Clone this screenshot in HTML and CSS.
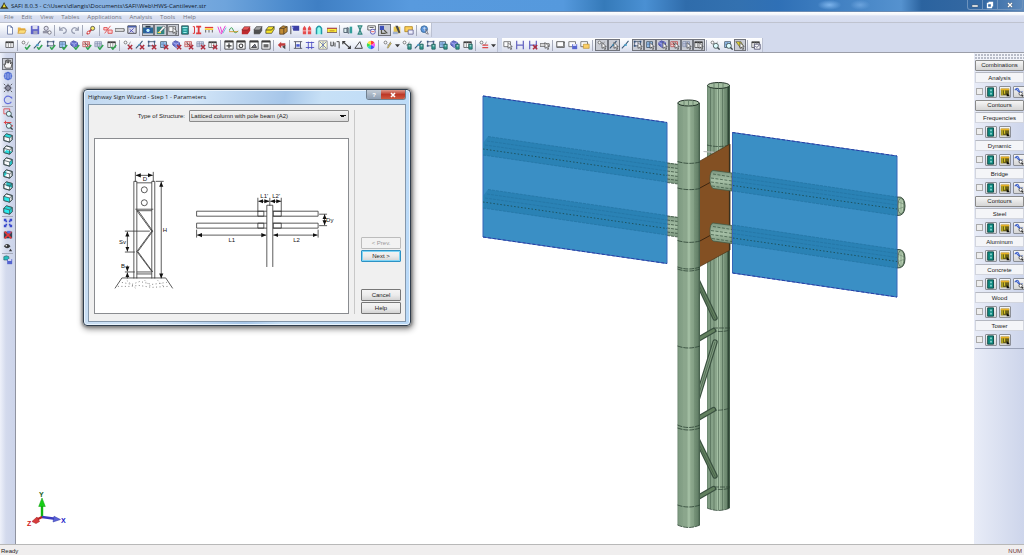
FILE: index.html
```html
<!DOCTYPE html>
<html lang="en">
<head>
<meta charset="utf-8">
<title>SAFI 8.0.3</title>
<link rel="stylesheet" href="styles.css">
</head>
<body>
<div class="app">
  <header class="titlebar">
    <svg class="logo" viewBox="0 0 10 10" aria-hidden="true"><path d="M0 8.500L2.500 5 4.500 1l2 4L9.500 8.500z" fill="#3d3a1c"/><path d="M3 7l1.500-4L6.500 7z" fill="#f0e02c"/></svg>
    <h1 class="title">SAFI 8.0.3 - C:\Users\dlangis\Documents\SAFI\Web\HWS-Cantilever.str</h1>
    <div class="caption">
      <button class="cap" aria-label="Minimize"><svg viewBox="0 0 10 8"><path d="M2 4h6v2H2z" fill="#fff" stroke="#456" stroke-width=".5"/></svg></button>
      <button class="cap" aria-label="Restore"><svg viewBox="0 0 10 8"><path d="M3.500 1.500h4v4M2.500 2.500h4v4h-4z" fill="none" stroke="#fff" stroke-width="1.300"/></svg></button>
      <button class="cap cap-wide" aria-label="Close"><svg viewBox="0 0 10 8"><path d="M3 2l4 4M7 2L3 6" stroke="#456" stroke-width="2.400"/><path d="M3 2l4 4M7 2L3 6" stroke="#fff" stroke-width="1.400"/></svg></button>
    </div>
  </header>

  <nav class="menubar" aria-label="Main menu">
    <button>File</button><button>Edit</button><button>View</button><button>Tables</button><button>Applications</button><button>Analysis</button><button>Tools</button><button>Help</button>
  </nav>

  <div class="toolbars">
    <div class="toolrow"><div class="toolbar bar-standard" role="toolbar" aria-label="Standard" data-bar="standard"></div></div>
    <div class="toolrow">
      <div class="toolbar bar-edit" role="toolbar" aria-label="Edit" data-bar="edit"></div>
      <div class="toolbar bar-select" role="toolbar" aria-label="Selection" data-bar="select"></div>
    </div>
  </div>

  <div class="work">
    <aside class="viewbar" role="toolbar" aria-label="View" data-bar="view"></aside>

    <main class="canvas">
      <svg class="scene" viewBox="16 53 957 491" preserveAspectRatio="xMinYMin meet" role="img" aria-label="Highway sign structure">
        <defs>
          <linearGradient id="col">
            <stop offset="0" stop-color="#66826a"/><stop offset=".06" stop-color="#7f9b82"/><stop offset=".25" stop-color="#86a288"/>
            <stop offset=".27" stop-color="#8ba68c"/><stop offset=".44" stop-color="#8ba68c"/><stop offset=".45" stop-color="#a3bfa3"/><stop offset=".57" stop-color="#a0bba0"/>
            <stop offset=".58" stop-color="#8ea98e"/><stop offset=".74" stop-color="#839f85"/><stop offset=".75" stop-color="#769278"/>
            <stop offset=".9" stop-color="#66826a"/><stop offset="1" stop-color="#405a47"/>
          </linearGradient>
          <linearGradient id="pipe" x2="0" y2="1"><stop offset="0" stop-color="#7b957e"/><stop offset=".5" stop-color="#a6c0a6"/><stop offset="1" stop-color="#7a957d"/></linearGradient>
          <g id="leftpipe">
            <path d="M667 162.500L678 164V184L667 182.500z" fill="url(#pipe)"/>
            <path d="M667 163l11 1.500M667 167l11 1.500M667 171l11 1.500M667 175l11 1.500M667 179l11 1.500M667 182.500l11 1.500" stroke="#2e4433" stroke-width=".7" stroke-dasharray="3 1"/>
          </g>
          <g id="leftshade">
            <path d="M488 136.500L667 162.500V182L483 155V143z" fill="#2a82b5"/>
            <path d="M488 136.500L667 162.500M487 141L667 167M485 145L667 171M483 155L667 182" stroke="#2475a5" stroke-width=".8" stroke-dasharray="3 1" fill="none"/>
            <path d="M483 149L667 175.500" stroke="#1c4f58" stroke-width=".9" stroke-dasharray="1.500 2"/>
          </g>
          <g id="rightpipe">
            <path d="M713 170.500L732 173V191L713 188.500Q710 186 710 179 710 171 713 170.500z" fill="url(#pipe)" stroke="#3d5743" stroke-width=".7"/>
            <path d="M713 174l19 3M711 178l21 3M711 182l21 3M712 186l20 3" stroke="#3a5540" stroke-width=".7" stroke-dasharray="3 1.500"/>
            <path d="M897 197Q905 196 905 206T897 215.500z" fill="#9cb69a" stroke="#24382a" stroke-width=".9"/>
            <ellipse cx="901" cy="206" rx="3" ry="8" fill="#b9d1b4" stroke="#3e5842" stroke-width=".7"/>
            <path d="M901 199v14M898.500 202l5 2M898.500 209l5-2" stroke="#607a64" stroke-width=".5"/>
          </g>
          <g id="rightshade">
            <path d="M733 172.500L897 197V215.500L733 191z" fill="#2a82b5"/>
            <path d="M733 172.500L897 197M733 177L897 201M733 181L897 205M733 191L897 215.500" stroke="#2475a5" stroke-width=".8" stroke-dasharray="3 1" fill="none"/>
            <path d="M733 185.500L897 209" stroke="#1c4f58" stroke-width=".9" stroke-dasharray="1.500 2"/>
          </g>
        </defs>

        <path d="M707 85H730V508Q718.500 513 707 508z" fill="url(#col)"/>
        <path d="M710.500 87V509M714 88V510M718.500 88V510.500M722.500 88V510M727.500 87V509" stroke="#3c5743" stroke-width=".5"/>
        <path d="M728.500 86V508" stroke="#2e4535" stroke-width="1.400"/>
        <ellipse cx="718.500" cy="85.500" rx="11" ry="3" fill="#a2bca0" stroke="#24352a" stroke-width="1"/>
        <path d="M714 83v5M718.500 83v5M723 83v5" stroke="#53705a" stroke-width=".7"/>
        <path d="M707 508Q718.500 513 730 508M707 145Q718.500 148 730 145M712 330Q720 333 730 330M713 328h17M712 410Q722 411 730 408M712 488Q720 491 730 488M714 487h16" fill="none" stroke="#2b4132" stroke-width=".7" stroke-dasharray="5 1"/>
        <path d="M703.500 151.500l11 .800" stroke="#bbb" stroke-width="1.200"/>

        <use href="#leftpipe"/><use href="#leftpipe" y="53"/>
        <path d="M699 161.500L730 144V250L699 267z" fill="#835023" stroke="#4c3317" stroke-width=".7"/>
        <path d="M699 188.500l11-6M699 241.500l11-6" stroke="#3e2610" stroke-width="1"/>
        <path d="M729.500 144.500V250" stroke="#39301d" stroke-width="1.200"/>

        <g stroke-linecap="round" fill="none">
          <path d="M697 280L715 318M697 340L713.500 330.500M697 400L715 342M697 419L713.500 409.500M697 439L715 476M697 498L713.500 488.500" stroke="#3a5140" stroke-width="5.400"/>
          <path d="M697 280L715 318M697 340L713.500 330.500M697 419L713.500 409.500M697 439L715 476M697 498L713.500 488.500" stroke="#62805f" stroke-width="3"/>
          <path d="M697 400L715 342" stroke="#809c80" stroke-width="3"/>
          <path d="M697 281L715 318.500M697 400L715 342M697 440L715 476.500" stroke="#425a45" stroke-width=".7"/>
        </g>

        <path d="M677.500 103H700V525Q688.500 530 677.500 525z" fill="url(#col)"/>
        <path d="M677.500 525Q688.500 530 700 525M677.500 161.500Q688.500 165 700 162M677.500 188Q688.500 191 700 188.500M677.500 240.500Q688.500 244 700 241M677.500 267Q688.500 271 700 267M677.500 269Q688.500 273 700 269M677.500 346Q688.500 350 700 346M677.500 425Q688.500 430 700 425M677.500 428Q688.500 432 700 428M677.500 505Q688.500 509 700 505" fill="none" stroke="#2b4132" stroke-width=".8" stroke-dasharray="5 1"/>
        <ellipse cx="688.500" cy="103" rx="10.700" ry="3" fill="#a2bca0" stroke="#24352a" stroke-width="1"/>
        <path d="M684 101v4M688.500 100.500v5M693 101v4" stroke="#53705a" stroke-width=".7"/>

        <use href="#rightpipe"/><use href="#rightpipe" y="52.500"/>
        <path d="M483 96L667 122.500V263.500L483 237z" fill="#3a8fc5" stroke="#3766b8" stroke-width="1"/>
        <path d="M732.500 132.500L897 156V297L732.500 273z" fill="#3a8fc5" stroke="#3766b8" stroke-width="1"/>
        <path d="M483 96L667 122.500M483 237L667 263.500M732.500 132.500L897 156M732.500 273L897 297" stroke="#2741a6" stroke-width="1" stroke-dasharray="3 2"/>
        <use href="#leftshade"/><use href="#leftshade" y="53"/>
        <use href="#rightshade"/><use href="#rightshade" y="52.500"/>

        <path d="M42 517V505" stroke="#12b512" stroke-width="2.400"/><path d="M42 498l3.300 8.500h-6.600z" fill="#16cf16" stroke="#0a9a0a" stroke-width=".5"/>
        <path d="M42 517l13 1.700" stroke="#3c3cc0" stroke-width="2.400"/><path d="M60.500 519.500l-7.500 2.500 1-5.800z" fill="#5a62d8" stroke="#3038a8" stroke-width=".5"/>
        <path d="M42 517l-5 2.500" stroke="#b22" stroke-width="2.400"/><path d="M32 521.500l5-4.500 2.500 4.500-3.500 2z" fill="#d83c3c" stroke="#a22" stroke-width=".6"/>
        <text class="axis axis-y" x="39" y="497">Y</text><text class="axis axis-x" x="61" y="523">X</text><text class="axis axis-z" x="27" y="526">Z</text>
      </svg>

      <section class="dialog" role="dialog" aria-labelledby="dlg-title">
        <header class="dialog-head">
          <h2 id="dlg-title">Highway Sign Wizard - Step 1 - Parameters</h2>
          <div class="dialog-caps"><button class="dlg-help" aria-label="Context help">?</button><button class="dlg-close" aria-label="Close dialog"><svg viewBox="0 0 10 8"><path d="M3 2l4 4M7 2L3 6" stroke="#fff" stroke-width="1.600"/></svg></button></div>
        </header>
        <div class="dialog-body">
          <div class="params">
            <div class="field">
              <label for="structure">Type of Structure:</label>
              <select id="structure"><option>Latticed column with pole beam (A2)</option></select>
            </div>
            <div class="preview">
              <svg viewBox="94 139 254 175" role="img" aria-label="Latticed column dimensions">
                <defs><marker id="ar" viewBox="0 0 6 6" refX="6" refY="3" markerWidth="5" markerHeight="5" markerUnits="userSpaceOnUse" orient="auto-start-reverse"><path d="M0 .500L6 3 0 5.500z" fill="#111"/></marker></defs>
                <g fill="none" stroke="#333" stroke-width=".8">
                  <path d="M134.500 172v10M152.500 172v10M133 279V181.500h3V279M151 279V181.500h3V279M136 183h15M134.500 209.500h18M136 211h15M136 272.500h15M136 274.500h15"/>
                  <circle cx="143.500" cy="190" r="3"/><circle cx="143.500" cy="203" r="3"/>
                  <path d="M136 211L151 231.500 136 252 151 272M137 210.500L152 231.500 137 252 152 272.500"/>
                  <path d="M155 181.500h8M124 231.500h25M124 252.500h10M124 272.500h10"/>
                  <path d="M114 289l7-10.500h44L172 289"/>
                  <path d="M196 211.500h122v5H196zM196 223.500h122v5H196z"/>
                  <path d="M257.500 211.500h6v5h-6zM273 211.500h8v5h-8zM257.500 223.500h6v5h-6zM273 223.500h8v5h-8z"/>
                  <path d="M266.500 267.500V205.500h6V267.500" fill="#fff"/>
                  <path d="M257.500 198v14M269.500 198v8M281 198v14M196 230v8M318 230v8M319 214.500h8M319 226h8"/>
                  <g marker-end="url(#ar)">
                    <path d="M126.500 266v6"/><path d="M126.500 279v-6"/>
                  </g>
                  <g marker-start="url(#ar)" marker-end="url(#ar)">
                    <path d="M135 175.500h17"/><path d="M126.500 232v20"/><path d="M160.500 182v97"/>
                    <path d="M258 201.500h11"/><path d="M270 201.500h11"/>
                    <path d="M196.500 235.500H266"/><path d="M273 235.500h44.500"/><path d="M324.500 214.500v11"/>
                  </g>
                </g>
                <path d="M121 283l10 2 8-3 12 3 15-2M117 287l12 0 9-1 13 2 16-1M126 281l9 8M144 281l7 7M157 281l6 6" stroke="#666" stroke-width=".8" stroke-dasharray="1 2.500" fill="none"/>
                <g class="dims"><text x="142" y="181">D</text><text x="162" y="232">H</text><text x="118" y="244">Sv</text><text x="120" y="269">B</text><text x="260" y="198">L1'</text><text x="272" y="198">L2'</text><text x="326" y="222">Dy</text><text x="228" y="242">L1</text><text x="293" y="242">L2</text></g>
              </svg>
            </div>
          </div>
          <div class="actions">
            <button class="btn" disabled>&lt; Prev.</button><button class="btn primary">Next &gt;</button>
            <button class="btn cancel">Cancel</button><button class="btn">Help</button>
          </div>
        </div>
      </section>
    </main>

    <aside class="results" aria-label="Results" id="results"></aside>
  </div>

  <footer class="status"><span>Ready</span><span class="num">NUM</span></footer>
</div>
<script src="app.js"></script>
</body>
</html>
```
FILE: styles.css
```css
* { box-sizing: border-box; }
body {
  margin: 0;
  font: 6px/8px "Liberation Sans", Arial, sans-serif;
  color: #222;
  background: #d3daed;
}
button, select { font: inherit; color: inherit; margin: 0; padding: 0; border: 0; background: none; }
svg { display: block; }
h1, h2 { margin: 0; font-weight: normal; }

.app { display: flex; flex-direction: column; height: 100vh; overflow: hidden; }

.titlebar {
  display: flex; align-items: center; gap: 2px; flex: none; height: 12px;
  border-bottom: 1px solid #6b8cb4;
  background:
    radial-gradient(ellipse 12px 5px at 81% 45%, #7db4ec, transparent),
    radial-gradient(ellipse 10px 5px at 84% 45%, #6ba3dd, transparent),
    linear-gradient(90deg, #8db4e0 0, #86b1e2 14%, #6ea4dc 22%, #4c8bcd 28%, #3f7fc4 31%, #589ade 40%, #5599dd 55%, #357ab9 59%, #4a90d3 63%, #2f6cab 67%, #3371b0 72%, #2f70b6 76%, #5592cf 88%, #2b639f 90%, #3569a3 96%, #5e8abc 100%);
}
.logo { width: 9px; height: 9px; }
.title { flex: 1; font: 6px/10px "Open Sans", sans-serif; color: #101828; white-space: nowrap; }
.caption { display: flex; height: 10px; margin-right: 1px; align-self: flex-start; border: 1px solid #6e93bd; border-top: 0; border-radius: 0 0 3px 3px; }
.cap { width: 15px; border-right: 1px solid #6e93bd; }
.cap-wide { width: 24px; border: 0; }
.cap svg { width: 10px; height: 8px; margin: 0 auto; }

.menubar {
  display: flex; gap: 8px; flex: none; height: 11px; padding: 0 4px;
  border-bottom: 1px solid #bfc3cf;
  background: linear-gradient(#fff 0, #f4f6fb 25%, #dbe1f2 40%, #d6dcef 100%);
}
.menubar button { font: 6px/10px "Open Sans", sans-serif; color: #6f7480; }

.toolbars { display: flex; flex-direction: column; gap: 1px; flex: none; border-bottom: 1px solid #9b9ea8; }
.toolrow { display: flex; gap: 4px; height: 14px; background: #d3daed; }
.toolbar {
  display: flex; align-items: center; padding-left: 4px;
  border-right: 1px solid #bbc1d2;
  background: linear-gradient(#fff, #eff2f9 45%, #d7dcec);
}
.bar-standard { width: 432px; }
.bar-edit { width: 498px; }
.bar-select { width: 261px; padding-left: 0; }
.tool { flex: 1 1 12px; min-width: 0; height: 12px; }
.tool svg { width: 10px; height: 10px; margin: 0 auto; opacity: .88; }
.tool.pressed { background: #c9ccd4; border: 1px solid #71747c; }
.tool.drop { flex: 0 0 7px; }
.tool.drop svg { width: 5px; height: 5px; }
.sep { flex: none; width: 1px; height: 11px; margin: 0 2px 0 1px; background: #a5aaba; }

.work { display: flex; flex: 1; min-height: 0; }
.viewbar {
  display: flex; flex-direction: column; flex: none; width: 16px; padding: 5px 2px 0;
  border-right: 1px solid #8f93a0;
  background: linear-gradient(90deg, #eef1fa, #d3daed 40%, #ccd4ea);
}
.viewbar .tool { flex: none; width: 11px; }
.viewbar .sep { width: 11px; height: 1px; margin: 0; }
.canvas { position: relative; flex: 1; min-width: 0; background: #fff; }
.scene { width: 100%; height: 100%; }
.axis { font: bold 7px "Liberation Sans", sans-serif; }
.axis-y { fill: #185c24; }
.axis-x { fill: #1818c8; }
.axis-z { fill: #d02020; }

.dialog {
  position: absolute; left: 67px; top: 36px; width: 328px;
  padding: 0 4px 3px;
  border: 1px solid #2f3d4c; border-radius: 4px;
  background: linear-gradient(100deg, #c2d9f1 0, #d3e6f8 30%, #a6c6e9 55%, #c7e0f6 65%, #b9d9f8 100%);
  box-shadow: 0 0 3px 1px #777, 1px 2px 6px 1px #888, inset 0 0 0 1px #e9f3fc;
}
.dialog-head { display: flex; justify-content: space-between; height: 14px; }
.dialog-head h2 { font: 6px/15px "Open Sans", sans-serif; color: #222; }
.dialog-caps { display: flex; height: 10px; border: 1px solid #70808f; border-top: 0; border-radius: 0 0 3px 3px; overflow: hidden; }
.dlg-help { width: 14px; font-weight: bold; line-height: 8px; background: linear-gradient(#c3ccd6, #8fa0b4); color: #fff; }
.dlg-close { width: 24px; background: linear-gradient(#dd9a8d, #bd3827 50%, #cd5a40); }
.dlg-close svg { width: 10px; height: 8px; margin: 0 auto; }
.dialog-body {
  display: flex; padding: 5px 4px 7px 5px;
  border: 1px solid #8497ab;
  background: #f0f0f0;
}
.params { flex: 1; padding-right: 5px; border-right: 1px solid #c8c8c8; }
.field { display: flex; justify-content: flex-end; align-items: center; gap: 4px; }
.field select {
  width: 160px; height: 12px; padding: 0 1px;
  border: 1px solid #8a8a8a; border-radius: 1px; appearance: none;
  background:
    linear-gradient(45deg, transparent 50%, #111 50%) right 5px top 4px / 3px 3px no-repeat,
    linear-gradient(-45deg, transparent 50%, #111 50%) right 2px top 4px / 3px 3px no-repeat,
    linear-gradient(#f3f3f3, #dcdcdc);
}
.preview { margin-top: 16px; border: 1px solid #8a8c90; background: #fff; }
.preview svg { width: 100%; }
.dims { font: 6px "Liberation Sans", sans-serif; fill: #111; }
.actions { display: flex; flex-direction: column; gap: 1px; width: 46px; padding-left: 6px; justify-content: flex-end; }
.btn {
  height: 12px; border: 1px solid #777; border-radius: 1px; line-height: 9px;
  background: linear-gradient(#f4f4f4, #ececec 50%, #d4d4d4);
}
.btn:disabled { color: #999; border-color: #bcbcbc; background: #f2f2f2; }
.btn.primary { border-color: #2d92c4; box-shadow: inset 0 0 0 1px #7fd4f5; }
.btn.cancel { margin-top: 26px; }

.results { flex: none; width: 51px; padding: 0 0 0 1px; border-left: 1px solid #fff; background: linear-gradient(90deg, #e8ecf7, #cdd5eb); }
.grip { height: 7px; background: radial-gradient(circle at 1px 2px, #b8bcc8 1px, transparent 1px) 0 0 / 3px 3px, #f2f4fa; }
.group { display: block; height: 11px; margin-bottom: 2px; text-align: center; line-height: 10px; background: #f4f5f8; border: 1px solid #d2d5de; border-top-color: #b4b7c0; }
.wide { display: block; width: 100%; height: 11px; margin-bottom: 1px; line-height: 9px; border: 1px solid #8a8a8a; border-radius: 1px; background: linear-gradient(#f6f6f6, #d5d5d5); }
.checks { display: flex; align-items: center; gap: 2px; height: 13px; margin-bottom: 2px; padding-left: 1px; }
.checks input { appearance: none; flex: none; width: 7px; height: 7px; margin: 0; border: 1px solid #aaa; background: #eee; }
.checks button { width: 12px; height: 12px; border: 1px solid #8c8f96; border-radius: 1px; background: linear-gradient(#f6f6f6, #d5d5d5); }
.checks svg { width: 10px; height: 10px; }
.results .end { height: 1px; background: #9ba3b8; }

.status { display: flex; justify-content: space-between; flex: none; height: 11px; padding: 0 2px 0 1px; line-height: 12px; border-top: 1px solid #b8b8b8; background: #f0eeee; }
.num { color: #6b3030; }
```
FILE: app.js
```js
// Icon fragments on a 12 x 12 grid.
const parts = {
  node: '<circle cx="3" cy="3" r="1.700" fill="#fff" stroke="#555"/><path d="M5 6h2l2-4" stroke="#888" fill="none"/>',
  beam: '<path d="M1 10L5 6l4-5" stroke="#246" stroke-width="1.300"/><path d="M4 5h3v2H4z" fill="#39c"/>',
  plate: '<path d="M2 2h7v5H2z" fill="#eef" stroke="#345"/><path d="M1 1h2v2H1zM8 1h2v2H8zM1 6h2v2H1z" fill="#247"/>',
  shell: '<path d="M2 2h7v7H2z" fill="#9cf" stroke="#345"/><path d="M2 5h7M5 2v7" stroke="#57a"/>',
  solid: '<path d="M1 3l3-2 5 2v4L5 9 1 6z" fill="#56c" stroke="#339"/><path d="M1 3l4 2 4-2M5 5v4" stroke="#aae" fill="none"/>',
  redgrid: '<path d="M1 2h8v6H1zM1 5h8M4 2v6M7 2v6" fill="#fee" stroke="#b44"/><path d="M3 3l4 4" stroke="#444"/>',
  grid: '<path d="M1 2h8v6H1zM1 4h8M1 6h8M4 2v6M7 2v6" fill="#eef" stroke="#679" stroke-width=".8"/>',
  table: '<path d="M1 2h9v7H1z" fill="#fff" stroke="#444"/><path d="M1 3h9" stroke="#222" stroke-width="1.500"/><path d="M4 3v6M7 3v6" stroke="#777"/>',
  check: '<path d="M5 8.500l2 2.500 4-5" fill="none" stroke="#1b9a3c" stroke-width="1.900"/>',
  cross: '<path d="M6 6l5 5M11 6l-5 5" stroke="#a81424" stroke-width="1.800"/>',
  cursor: '<path d="M6 3v7l2-1.500 1.200 3 1.200-.6L9.200 8H11z" fill="#fff" stroke="#222" stroke-width=".8"/>',
  box: '<path d="M7 5h4v6H7z" fill="#189080" stroke="#0a4c48"/><path d="M8 7h2" stroke="#fff"/>',
  page: '<path d="M3 1h4l2 2v8H3z" fill="#fff" stroke="#56689a"/><path d="M7 1v2h2" fill="none" stroke="#56689a"/>',
  open: '<path d="M1 10V3h3l1 1h5v6z" fill="#e8a82a"/><path d="M1 10l2-4h8l-2 4z" fill="#ffdc6a" stroke="#b87c14" stroke-width=".6"/>',
  disk: '<path d="M1 1h10v10H1z" fill="#4c50c4"/><path d="M3 1h6v4H3z" fill="#dde"/><path d="M4 7h5v4H4z" fill="#99b"/>',
  print: '<circle cx="5" cy="4" r="2.500" fill="#dde" stroke="#556"/><path d="M1 7h9v3H1z" fill="#889"/><circle cx="9" cy="9" r="2" fill="#fff" stroke="#556"/>',
  undo: '<path d="M2 2v4h4M2 6q5-6 8 0 0 4-4 4" fill="none" stroke="#8d93a8" stroke-width="1.500"/>',
  redo: '<path d="M10 2v4H6M10 6Q5 0 2 6q0 4 4 4" fill="none" stroke="#8d93a8" stroke-width="1.500"/>',
  link: '<path d="M1 11l6-6" stroke="#c22" stroke-width="2"/><circle cx="8" cy="4" r="2.400" fill="#fe5" stroke="#333"/><circle cx="3" cy="9" r="1.600" fill="#fff" stroke="#c22"/>',
  percent: '<path d="M1 3h4v3H1zM6 6h5v4H6zM2 10l7-9" fill="#fcc" stroke="#d33"/>',
  bar: '<path d="M0 4.500h11v3H0z" fill="#fff" stroke="#333"/>',
  windowed: '<path d="M1 1h10v9H1z" fill="#dde" stroke="#222"/><path d="M1 2h10" stroke="#334a9c" stroke-width="2"/><path d="M3 9l5-5M3 5l5 4" stroke="#33a"/>',
  eye: '<path d="M0 3h12v7H0z" fill="#135a8c"/><circle cx="6" cy="6.500" r="2.600" fill="#bff" stroke="#02a"/><path d="M3 1h6v2H3z" fill="#123"/>',
  paint: '<path d="M1 2h9v9H1z" fill="#1a7c78"/><path d="M3 8l6-7 2 2-6 6z" fill="#fff" stroke="#222" stroke-width=".6"/><path d="M2 9h4" stroke="#fd3" stroke-width="1.500"/>',
  frame: '<path d="M1 2h8v6H1z" fill="#fff" stroke="#555"/>',
  teal: '<path d="M2 1h8v10H2z" fill="#0d9490" stroke="#14333a"/><path d="M3 3h6M4 6h4M4 9h4" stroke="#bff"/>',
  ibeam: '<path d="M1 2h2v8H1" fill="none" stroke="#d22" stroke-width="1.200"/><path d="M5 2h6M8 2v8M5 10h6" stroke="#d22" stroke-width="2.200"/>',
  loads: '<path d="M1 3h10" stroke="#d22" stroke-width="1.500"/><path d="M1 4h10v2H1z" fill="#fc2"/><path d="M2 6v3M6 6v3M10 6v3" stroke="#333"/>',
  stripes: '<path d="M1 2l3 8M4 2l2 7M10 1L5 11" stroke="#e3c" stroke-width="1.200"/><path d="M11 3L7 10" stroke="#4bc"/>',
  wave: '<path d="M0 7q3-7 5-1t6 1" fill="none" stroke="#2a9a44" stroke-width="1.200"/><path d="M0 8h11" stroke="#c80"/>',
  redblk: '<path d="M1 6l3-3h7v4L8 11H1z" fill="#b80f14"/><path d="M1 6l3-4h7L8 6z" fill="#e94040" stroke="#400" stroke-width=".6"/>',
  grayblk: '<path d="M1 6l3-4h7v5L8 11H1z" fill="#444"/><path d="M1 6l3-4h7L8 6zM1 8.500h8" fill="#999" stroke="#222" stroke-width=".7"/>',
  yelblk: '<path d="M1 6l3-4h7v3L8 10H1z" fill="#fbe30b" stroke="#221" stroke-width=".8"/><path d="M1 6h7l3-4" fill="none" stroke="#221"/>',
  brnblk: '<path d="M2 4l4-3 5 1v6l-4 3H2z" fill="#bd7f1b" stroke="#3a2408" stroke-width=".9"/><path d="M2 4h5v7M7 4l4-2" fill="none" stroke="#3a2408"/>',
  flag: '<path d="M1 1v10" stroke="#222"/><path d="M2 1h9v6H4z" fill="#23289a"/><path d="M2 2h2v2H2z" fill="#9af"/>',
  towers: '<path d="M1 11V4l2-3 2 3v7zM7 11V4l2-3 2 3v7z" fill="#e53737"/><path d="M1 7h10" stroke="#fcc"/>',
  arch: '<path d="M3 11V4q3-5 6 0v7" fill="#8fe" stroke="#088e9c" stroke-width="1.800"/>',
  yelbar: '<path d="M0 4h12v5H0z" fill="#fe2" stroke="#644"/><path d="M0 4h12" stroke="#b22"/><path d="M3 7h6" stroke="#a60"/>',
  book: '<path d="M1 4h4v5H1zM5 3l2 1v6L5 9z" fill="#dee" stroke="#345"/><path d="M8 2h3v8H8z" fill="#1a9490"/>',
  glass: '<path d="M3 1h6M3 11h6M4 1l4 10M8 1L4 11" stroke="#187a70" stroke-width="1.500"/>',
  redo2: '<path d="M1 1h9v5H1z" fill="#fff" stroke="#333"/><path d="M3 3h5" stroke="#333"/><circle cx="7" cy="8" r="3" fill="#fff" stroke="#33a"/><path d="M5 8h4" stroke="#d33"/>',
  node2: '<path d="M1 1h5v5H1z" fill="#2a3fb5"/><path d="M6 6l4 4M3 6v4h5" stroke="#443" stroke-width="1.400" fill="none"/>',
  edit: '<path d="M2 2h8v8H2z" fill="#e8c23a"/><path d="M4 1h3l3 8-2 1z" fill="#333"/><path d="M1 8h6v3H1z" fill="#9ac"/>',
  folderq: '<path d="M1 2h9v6H1z" fill="#fc4" stroke="#a70"/><path d="M5 6h6v5H5z" fill="#eef" stroke="#558"/>',
  help: '<circle cx="5" cy="5" r="4" fill="#4c8ddc" stroke="#258"/><path d="M4 4q2-2 2 1v2" fill="none" stroke="#fff"/><path d="M7 5v5l3 1z" fill="#fff" stroke="#334" stroke-width=".7"/>',
  black: '<path d="M1 1h10v10H1z" fill="#fff" stroke="#222"/><path d="M1 2h10" stroke="#222" stroke-width="2"/>',
  plus: '<path d="M6 4v6M3 7h6" stroke="#222" stroke-width="1.500"/>',
  ring: '<circle cx="6" cy="7" r="2.200" fill="none" stroke="#222" stroke-width="1.300"/>',
  fill: '<path d="M3 5h6v4H3z" fill="#555"/>',
  slash: '<path d="M3 9l4-4 2 4z" fill="#667" stroke="#222"/>',
  turn: '<path d="M1 6l4-4v2h5v3H5v3z" fill="#b22"/><path d="M6 8l4 3V6" fill="#333"/>',
  stretch: '<path d="M1 2h10M1 10h10M3 2v8M9 2v8" stroke="#334" stroke-width="1"/><path d="M4 5h4v3H4z" fill="#34c"/>',
  crossed: '<path d="M1 3h10M1 9h10M4 2v9M8 2v9" stroke="#33b" stroke-width="1"/>',
  star: '<path d="M1 1h10v10H1z" fill="#ffc" stroke="#778"/><path d="M2 2l8 8M10 2l-8 8M6 2v8" stroke="#56a"/>',
  measure: '<path d="M1 2v5h3V2M6 3v5M8 2h3v8" fill="none" stroke="#333" stroke-width="1.200"/>',
  dim: '<path d="M1 2l9 8M1 5V2h3M7 10h3V7" fill="none" stroke="#222" stroke-width="1.400"/>',
  angle: '<path d="M1 10L7 2l3 8z" fill="none" stroke="#333" stroke-width="1.200"/>',
  color: '<path d="M6 6V1a5 5 0 0 1 4.300 2.500z" fill="#f22"/><path d="M6 6l4.300-2.500a5 5 0 0 1 0 5z" fill="#f4e"/><path d="M6 6l4.300 2.500A5 5 0 0 1 6 11z" fill="#33f"/><path d="M6 6v5a5 5 0 0 1-4.300-2.500z" fill="#1cc"/><path d="M6 6L1.700 8.500a5 5 0 0 1 0-5z" fill="#2d3"/><path d="M6 6L1.700 3.500A5 5 0 0 1 6 1z" fill="#fd2"/>',
  pen: '<path d="M5 9l4-6 1 1-4 6z" fill="#dc4" stroke="#653" stroke-width=".6"/>',
  redline: '<path d="M4 6h7M4 9h7" stroke="#d33" stroke-width="1.500"/>',
  arrow: '<path d="M0 3h12L6 10z" fill="#222"/>',
  diskS: '<path d="M5 5h6v6H5z" fill="#45c"/><path d="M6 5h4v2H6z" fill="#eef"/>',
  foldS: '<path d="M4 5h7v5H4z" fill="#fc5" stroke="#a70" stroke-width=".7"/>',
  span: '<path d="M2 1v10M10 1v10M2 6h8" stroke="#55b" stroke-width="1.500"/>',
  yellow: '<path d="M1 2h6l3 5-3 3z" fill="#e6d51e" stroke="#333" stroke-width=".7"/>',
  okbox: '<path d="M4 5h7v6H4z" fill="#fff" stroke="#335"/><path d="M5 7l2 2 3-3" stroke="#335" fill="none"/>',
  hand: '<path d="M3 11L1 6l2 .5V2l1.500-.5L5 5V1h1.700v4L8 1.500l1.300.5L9 6l1.500-2L11 5l-1.500 6z" fill="#fff" stroke="#222" stroke-width=".9"/>',
  globe: '<circle cx="6" cy="6" r="4.500" fill="#dfe6ff" stroke="#35c"/><path d="M1 6h10M6 1v10M2 3.500h8M2 8.500h8" stroke="#35c"/><ellipse cx="6" cy="6" rx="2.300" ry="4.500" fill="none" stroke="#35c"/>',
  atom: '<path d="M1 1l10 10M11 1L1 11M1 6h10M6 1v10" stroke="#333" stroke-dasharray="2 1"/><circle cx="6" cy="6" r="3" fill="#889" stroke="#223"/>',
  rotate: '<path d="M9.500 3A4.500 4.500 0 1 0 10 8" fill="none" stroke="#5561d8" stroke-width="1.300"/><path d="M8 2h3v3z" fill="#5561d8"/>',
  zoom: '<circle cx="7" cy="7" r="3" fill="#dff" stroke="#233"/><path d="M9 9l2.500 2.500" stroke="#233" stroke-width="1.600"/>',
  redbox: '<path d="M1 1h7v6H1z" fill="none" stroke="#d33"/>',
  redcross: '<path d="M1 3h9M3 1v4M9 7h3" stroke="#d33" stroke-width="1.300"/>',
  cubeW: '<path d="M1 4l3-3 7 2v5l-3 3-7-2z" fill="#fff" stroke="#233"/>',
  cubeT: '<path d="M1 4l3-3 7 2-3 3z" fill="#1dd"/>',
  cubeB: '<path d="M1 9l3-3 7 2-3 3z" fill="#1dd"/>',
  cubeR: '<path d="M8 6l3-3v5l-3 3z" fill="#1dd"/>',
  cubeL: '<path d="M1 4l3-2v5L1 9z" fill="#1dd"/>',
  cubeK: '<path d="M4 1l7 2v5L4 6z" fill="#1bb"/>',
  cubeF: '<path d="M1 4l7 2v5l-7-2z" fill="#1ee"/>',
  cubeE: '<path d="M1 4l7 2v5M8 6l3-3M1 4l3-3 7 2v5l-3 3-7-2z" fill="none" stroke="#233" stroke-width=".9"/>',
  expand: '<path d="M1 1h3v2h1v2H3V4H1zM11 1H8v2H7v2h2V4h2zM1 11h3V9h1V7H3v1H1zM11 11H8V9H7V7h2v1h2z" fill="#2436c8"/>',
  kill: '<path d="M1 2h10v8H1z" fill="#234"/><path d="M2 2l8 8M10 2l-8 8" stroke="#e22" stroke-width="2"/><path d="M5 1h4v3H5z" fill="#46d"/>',
  look: '<path d="M1 5q4-5 8 0-4 5-8 0" fill="#222"/><path d="M9 8l2 3H7z" fill="#222"/><circle cx="4" cy="4.500" r="1" fill="#fff"/>',
  stack: '<path d="M1 2l3-1 3 1v4H1z" fill="#1bb" stroke="#144" stroke-width=".7"/>',
  door: '<path d="M2 1h7v10H2z" fill="#0e8a80" stroke="#063c3c"/><path d="M6 3v2M6 7v2" stroke="#dff" stroke-width="1.300"/>',
  film: '<path d="M1 2h10v8H1z" fill="#6a611a"/><path d="M1 2h10v2H1z" fill="#e8b027"/><path d="M2.500 4v6M5.500 4v4" stroke="#dccb27" stroke-width="1.300"/><path d="M8 7l4 4H8z" fill="#111"/>',
  curve: '<path d="M1 4q3-5 5 0t4 1M2 2l6 6" fill="none" stroke="#46c" stroke-width="1.300"/><circle cx="8" cy="8" r="2" fill="#fff" stroke="#444"/><path d="M9 10l2 1" stroke="#222" stroke-width="1.500"/>'
};

// "|" is a separator, "!" marks a pressed button, "+" layers fragments.
const bars = {
  standard: 'page open disk print | undo redo | link | percent bar windowed | !eye !paint !frame+cursor teal ibeam loads stripes wave redblk grayblk yelblk brnblk flag towers arch yelbar | book glass redo2 !node2 edit folderq | help',
  edit: 'table | node+check beam+check plate+check shell+check solid+check redgrid+check grid+check table+check | node+cross beam+cross plate+cross shell+cross solid+cross redgrid+cross grid+cross table+cross | black+plus black+ring black+slash black+fill | turn | stretch crossed star measure dim angle color | node+pen arrow node+box beam+box plate+box shell+box solid+box table+box | node+redline arrow',
  select: 'frame+cursor span span+cross bar+cursor | table+frame frame+diskS frame+foldS | !node+cursor !beam+cursor beam !plate+cursor !shell+cursor !solid+cursor !redgrid+cursor !grid+cursor !table+cursor | node+zoom shell+zoom !yellow+cursor | table+okbox',
  view: '!hand globe atom rotate | redbox+zoom redcross+zoom | cubeW+cubeT+cubeE cubeW+cubeB+cubeE cubeW+cubeR+cubeE cubeW+cubeL+cubeE cubeW+cubeK+cubeE cubeW+cubeF+cubeE cubeW+cubeT+cubeF+cubeR+cubeE | expand kill look | stack+diskS'
};

const draw = names => `<svg viewBox="0 0 12 12" fill="none" aria-hidden="true">${names.split('+').map(n => parts[n]).join('')}</svg>`;

document.querySelectorAll('[data-bar]').forEach(bar => {
  bar.innerHTML = bars[bar.dataset.bar].split(' ').map(item => {
    if (item === '|') return '<span class="sep"></span>';
    const pressed = item[0] === '!';
    const names = pressed ? item.slice(1) : item;
    const cls = `tool${pressed ? ' pressed' : ''}${names === 'arrow' ? ' drop' : ''}`;
    return `<button class="${cls}" aria-label="${names.replace(/\+/g, ' ')}">${draw(names)}</button>`;
  }).join('');
});

const results = ['=Combinations', 'Analysis:3', '=Contours', 'Frequencies:2', 'Dynamic:3', 'Bridge:3', '=Contours', 'Steel:3', 'Aluminum:3', 'Concrete:3', 'Wood:2', 'Tower:2'];
document.getElementById('results').innerHTML = '<div class="grip"></div>' + results.map(row => {
  if (row[0] === '=') return `<button class="wide">${row.slice(1)}</button>`;
  const [name, count] = row.split(':');
  const id = 'show-' + name.toLowerCase();
  const tools = ['door', 'film', 'curve'].slice(0, count).map(n => `<button aria-label="${name} ${n}">${draw(n)}</button>`).join('');
  return `<label class="group" for="${id}">${name}</label><div class="checks"><input type="checkbox" id="${id}">${tools}</div>`;
}).join('') + '<div class="end"></div>';
```
